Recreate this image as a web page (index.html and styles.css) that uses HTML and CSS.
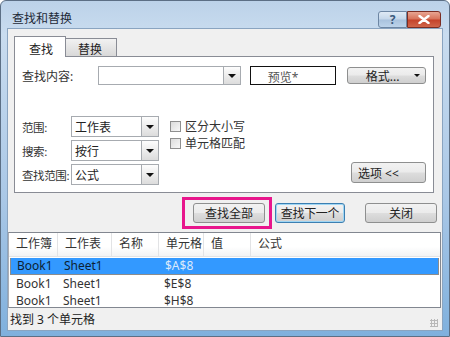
FILE: index.html
```html
<!DOCTYPE html>
<html lang="zh-CN">
<head>
    <meta charset="UTF-8">
    <title>查找和替换</title>
    <link rel="stylesheet" href="styles.css">
</head>
<body>
<div class="window">
    <!-- Title bar -->
    <div class="titlebar">
        <span class="title">查找和替换</span>
        <div class="caption-btns">
            <span class="cap-btn help">?</span>
            <span class="cap-btn close">
                <svg width="12" height="9" viewBox="0 0 12 9"><path d="M1.5 1 L10.5 8 M10.5 1 L1.5 8" stroke="#fff" stroke-width="2.4" stroke-linecap="round"/></svg>
            </span>
        </div>
    </div>

    <div class="client">
        <!-- Tabs -->
        <div class="tabs">
            <span class="tab active">查找</span>
            <span class="tab">替换</span>
        </div>

        <div class="panel">
            <div class="find-row">
                <span class="label">查找内容:</span>
                <div class="combo wide"><span class="combo-text"></span><span class="drop"></span></div>
                <div class="preview">预览*</div>
                <div class="btn format">格式...<span class="mini-arrow"></span></div>
            </div>

            <div class="options">
                <div class="option-fields">
                    <div class="field">
                        <span class="label short">范围:</span>
                        <div class="combo"><span class="combo-text">工作表</span><span class="drop"></span></div>
                    </div>
                    <div class="field">
                        <span class="label short">搜索:</span>
                        <div class="combo"><span class="combo-text">按行</span><span class="drop"></span></div>
                    </div>
                    <div class="field">
                        <span class="label short">查找范围:</span>
                        <div class="combo"><span class="combo-text">公式</span><span class="drop"></span></div>
                    </div>
                </div>
                <div class="checks">
                    <label class="check"><span class="box"></span>区分大小写</label>
                    <label class="check"><span class="box"></span>单元格匹配</label>
                </div>
                <div class="btn options-btn">选项 &lt;&lt;</div>
            </div>
        </div>

        <!-- Action buttons -->
        <div class="actions">
            <div class="btn action highlighted">查找全部</div>
            <div class="btn action default">查找下一个</div>
            <div class="btn action close-btn">关闭</div>
        </div>

        <!-- Results list -->
        <div class="results">
            <div class="row head">
                <span class="c1">工作簿</span>
                <span class="c2">工作表</span>
                <span class="c3">名称</span>
                <span class="c4">单元格</span>
                <span class="c5">值</span>
                <span class="c6">公式</span>
            </div>
            <div class="row selected">
                <span class="c1">Book1</span><span class="c2">Sheet1</span><span class="c3"></span><span class="c4">$A$8</span><span class="c5"></span><span class="c6"></span>
            </div>
            <div class="row">
                <span class="c1">Book1</span><span class="c2">Sheet1</span><span class="c3"></span><span class="c4">$E$8</span><span class="c5"></span><span class="c6"></span>
            </div>
            <div class="row">
                <span class="c1">Book1</span><span class="c2">Sheet1</span><span class="c3"></span><span class="c4">$H$8</span><span class="c5"></span><span class="c6"></span>
            </div>
        </div>

        <div class="status">
            <span>找到 3 个单元格</span>
            <span class="grip"></span>
        </div>
    </div>
</div>
</body>
</html>
```

FILE: styles.css
```css
/* Windows 7 style dialog */
body {
  margin: 0;
  font-family: "Noto Sans", "Noto Sans CJK SC", sans-serif;
  font-size: 12px;
  color: #222;
}
.window {
  width: 450px;
  height: 337px;
  box-sizing: border-box;
  background: linear-gradient(to bottom, #bcd2e9 0%, #c9dcef 10%, #a9c7e6 60%, #7fb0dd 100%);
  border: 1px solid #5c6f85;
  border-radius: 6px 6px 0 0;
  display: flex;
  flex-direction: column;
}
.titlebar {
  height: 27px;
  display: flex;
  align-items: flex-start;
  justify-content: space-between;
  padding: 0 8px 0 11px;
}
.title {
  margin-top: 8px;
  font-size: 12px;
  color: #1e2a38;
}
.caption-btns {
  display: flex;
  margin-top: 10px;
}
.cap-btn {
  height: 17px;
  box-sizing: border-box;
  border: 1px solid #6d86a3;
  display: flex;
  align-items: center;
  justify-content: center;
}
.help {
  width: 29px;
  border-radius: 3px 0 0 3px;
  background: linear-gradient(to bottom, #dfeaf5 0%, #c5d7ea 48%, #a9c2dd 52%, #bcd3ea 100%);
  color: #3c5a7c;
  font-weight: bold;
  font-size: 12px;
  line-height: 1;
}
.close {
  width: 34px;
  border-color: #7b2d23;
  border-radius: 0 3px 3px 0;
  background: linear-gradient(to bottom, #e8a592 0%, #d77158 48%, #c4422a 52%, #d0654a 100%);
}
.client {
  flex: 1;
  margin: 0 6px 5px 6px;
  background: #f0f0f0;
  border: 1px solid #8aa4c0;
  display: flex;
  flex-direction: column;
}
.tabs {
  display: flex;
  align-items: flex-end;
  padding: 7px 0 0 6px;
  height: 20px;
}
.tab {
  width: 52px;
  height: 18px;
  box-sizing: border-box;
  border: 1px solid #898c95;
  border-bottom: none;
  background: linear-gradient(to bottom, #f2f2f2, #d8d8d8);
  padding: 1px 0 0 12px;
  margin-left: -1px;
}
.tab.active {
  height: 21px;
  background: #fff;
  position: relative;
  z-index: 1;
  margin-bottom: -1px;
  padding: 3px 0 0 14px;
  margin-left: 0;
}
.panel {
  margin: 0 8px 0 6px;
  height: 137px;
  box-sizing: border-box;
  background: #fff;
  border: 1px solid #898c95;
  padding: 9px 7px 0 7px;
}
.find-row {
  display: flex;
  align-items: center;
  height: 19px;
}
.label {
  width: 76px;
  color: #333;
  white-space: nowrap;
}
.label.short {
  width: 49px;
  font-size: 11.5px;
  letter-spacing: -0.4px;
}
.combo {
  height: 21px;
  width: 88px;
  box-sizing: border-box;
  border: 1px solid #a7abb0;
  display: flex;
  background: #fff;
}
.combo.wide {
  width: 144px;
  height: 19px;
}
.combo-text {
  flex: 1;
  padding: 1px 0 0 3px;
  color: #222;
}
.drop {
  width: 16px;
  border-left: 1px solid #a7abb0;
  background: linear-gradient(to bottom, #fdfdfd, #dcdcdc);
  display: flex;
  align-items: center;
  justify-content: center;
}
.drop::after {
  content: "";
  border-left: 4px solid transparent;
  border-right: 4px solid transparent;
  border-top: 4px solid #111;
}
.preview {
  margin-left: 9px;
  width: 87px;
  height: 19px;
  box-sizing: border-box;
  border: 1px solid #111;
  padding: 1px 0 0 17px;
  color: #555;
}
.btn {
  box-sizing: border-box;
  border: 1px solid #8e8f8f;
  border-radius: 3px;
  background: linear-gradient(to bottom, #f2f2f2 0%, #ebebeb 48%, #dddddd 52%, #cfcfcf 100%);
  display: flex;
  align-items: center;
  justify-content: center;
  color: #222;
}
.format {
  margin-left: 11px;
  width: 79px;
  height: 17px;
  position: relative;
  padding-right: 8px;
}
.mini-arrow {
  position: absolute;
  right: 5px;
  top: 6px;
  border-left: 3px solid transparent;
  border-right: 3px solid transparent;
  border-top: 3px solid #111;
}
.options {
  display: flex;
  margin-top: 31px;
}
.option-fields {
  display: flex;
  flex-direction: column;
  gap: 3px;
}
.field {
  display: flex;
  align-items: center;
}
.checks {
  margin-left: 11px;
  margin-top: 3px;
  display: flex;
  flex-direction: column;
  gap: 3px;
}
.check {
  display: flex;
  align-items: center;
  height: 14px;
  color: #333;
}
.box {
  width: 9px;
  height: 9px;
  border: 1px solid #8f8f8f;
  background: linear-gradient(135deg, #dcdcdc, #f8f8f8);
  margin-right: 4px;
}
.options-btn {
  margin-left: auto;
  align-self: flex-end;
  width: 75px;
  height: 21px;
  justify-content: flex-start;
  padding-left: 6px;
  margin-bottom: 2px;
}
.actions {
  display: flex;
  padding: 10px 0 0 185px;
  height: 20px;
  gap: 10px;
}
.action {
  width: 72px;
  height: 20px;
}
.highlighted {
  position: relative;
}
.highlighted::after {
  content: "";
  position: absolute;
  left: -12px;
  top: -7px;
  width: 90px;
  height: 32px;
  box-sizing: border-box;
  border: 3px solid #e8168c;
}
.default {
  width: 70px;
  border-color: #3c7fb1;
  box-shadow: inset 0 0 0 1px #9fd6f4;
  letter-spacing: -0.3px;
}
.close-btn {
  margin-left: 10px;
}
.results {
  margin: 9px 1px 0 0;
  height: 76px;
  box-sizing: border-box;
  background: #fff;
  border: 1px solid #828790;
  border-left-color: #abadb3;
}
.row {
  display: flex;
  height: 17px;
  line-height: 17px;
  padding-left: 2px;
  color: #333;
}
.row span {
  padding-left: 5px;
  box-sizing: border-box;
}
.row.head {
  height: 23px;
  line-height: 22px;
  margin-bottom: 1px;
  padding-left: 0;
  background: linear-gradient(to bottom, #fff 0%, #fff 60%, #f2f3f4 100%);
  border-bottom: 1px solid #e2e3e5;
}
.row.head span {
  border-right: 1px solid #e2e3e5;
  padding-left: 7px;
}
.row.head span:last-child {
  border-right: none;
}
.c1 { width: 47px; }
.c2 { width: 54px; }
.c3 { width: 47px; }
.c4 { width: 45px; }
.c5 { width: 47px; }
.c6 { flex: 1; }
.row.head .c1 { width: 49px; }
.row.selected {
  background: #3399ff;
  color: #0c1f33;
  margin: 0 1px;
  padding-left: 1px;
  border: 1px solid #8c8c8c;
  border-top: none;
  height: 16px;
  line-height: 15px;
}
.row.selected .c4 {
  color: #dbe9fb;
}
.status {
  flex: 1;
  display: flex;
  align-items: center;
  justify-content: space-between;
  padding: 0 4px 0 2px;
  color: #222;
}
.grip {
  width: 8px;
  height: 8px;
  align-self: flex-end;
  margin-bottom: 3px;
  background: radial-gradient(circle, #b8b8b8 1px, transparent 1.2px);
  background-size: 3px 3px;
}
```
